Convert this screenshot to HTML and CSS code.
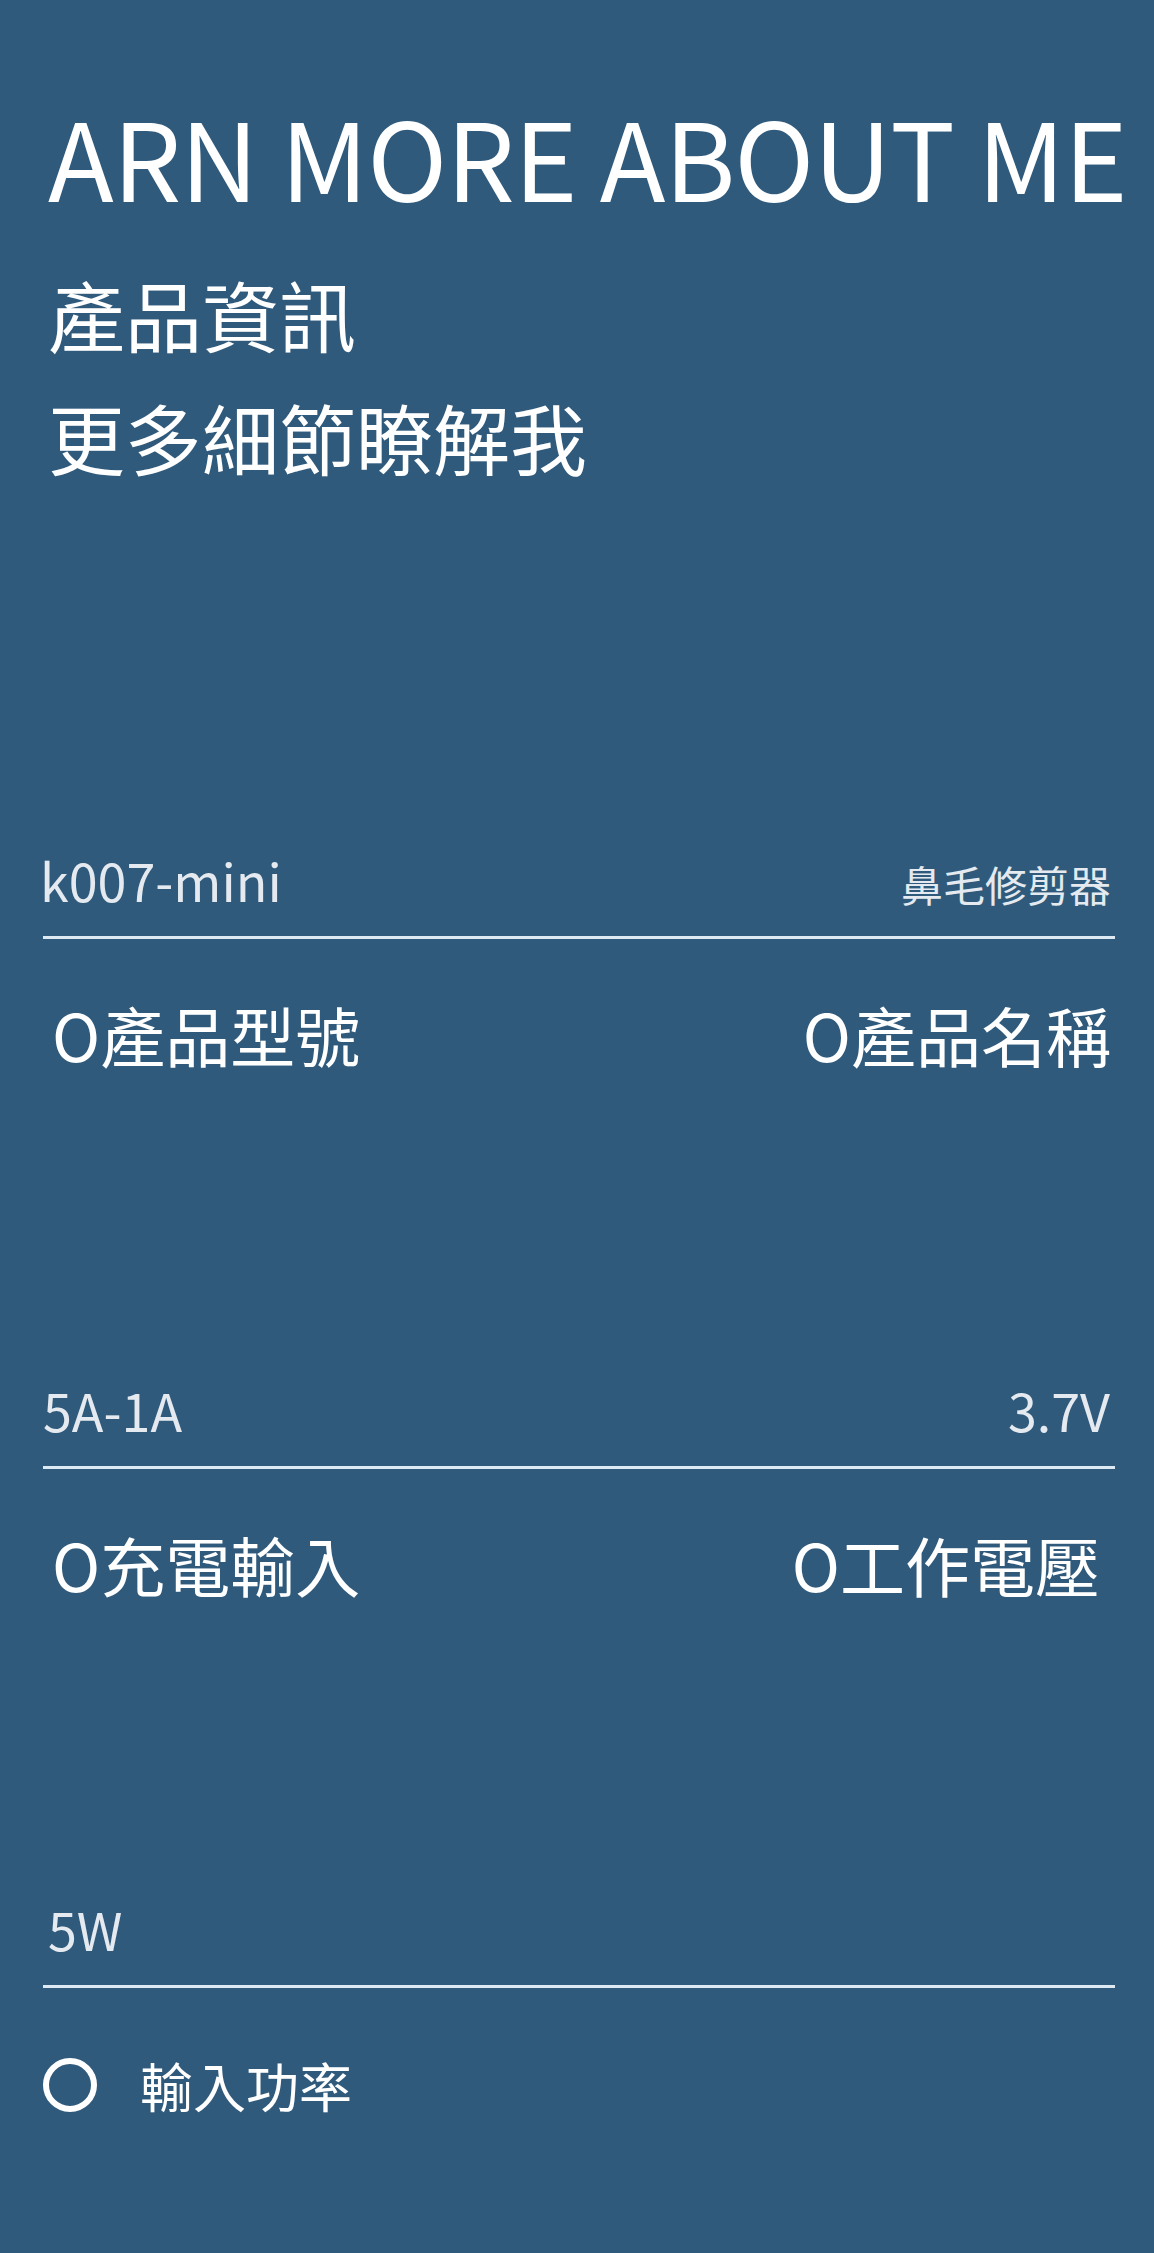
FILE: index.html
```html
<!DOCTYPE html>
<html lang="zh-Hant">
<head>
  <meta charset="UTF-8" />
  <meta name="viewport" content="width=device-width, initial-scale=1" />
  <title>產品資訊</title>
  <link rel="stylesheet" href="styles.css">
</head>
<body>
  <main class="page">
    <header class="hero">
      <h1 class="hero-title">ARN MORE ABOUT ME</h1>
      <div class="hero-sub">產品資訊</div>
      <div class="hero-sub">更多細節瞭解我</div>
    </header>

    <section class="spec spec-first">
      <div class="spec-values">
        <span class="spec-value spec-value-left">k007-mini</span>
        <span class="spec-value spec-value-small">鼻毛修剪器</span>
      </div>
      <div class="spec-line"></div>
      <div class="spec-labels">
        <span class="spec-label">O產品型號</span>
        <span class="spec-label">O產品名稱</span>
      </div>
    </section>

    <section class="spec">
      <div class="spec-values">
        <span class="spec-value">5A-1A</span>
        <span class="spec-value spec-value-right">3.7V</span>
      </div>
      <div class="spec-line"></div>
      <div class="spec-labels">
        <span class="spec-label">O充電輸入</span>
        <span class="spec-label spec-label-right">O工作電壓</span>
      </div>
    </section>

    <section class="spec spec-last">
      <div class="spec-values">
        <span class="spec-value spec-value-indent">5W</span>
      </div>
      <div class="spec-line"></div>
      <div class="spec-bullet">
        <span class="bullet-ring"></span>
        <span class="bullet-text">輸入功率</span>
      </div>
    </section>
  </main>
</body>
</html>
```

FILE: styles.css
```css
/* Page */
body {
  margin: 0;
  background-color: #2f5a7c;
  color: #ffffff;
  font-family: "Noto Sans CJK TC", "Noto Sans", sans-serif;
}
.page {
  box-sizing: border-box;
  min-height: 2253px;
  padding: 101px 39px 0 43px;
}

/* Heading block */
.hero-title {
  margin: 0 0 0 5px;
  font-size: 108px;
  line-height: 108px;
  font-weight: 400;
  letter-spacing: -1px;
  white-space: nowrap;
}
.hero-sub {
  margin: 46px 0 0 5px;
  font-size: 77px;
  line-height: 77px;
}
.hero-title + .hero-sub {
  margin-top: 66px;
}

/* Spec rows */
.spec {
  margin-top: 318px;
}
.spec-first {
  margin-top: 379px;
}
.spec-last {
  margin-top: 307px;
}
.spec-values {
  display: flex;
  justify-content: space-between;
  align-items: baseline;
  height: 52px;
}
.spec-value {
  font-size: 52px;
  line-height: 52px;
  color: #e4eaef;
}
.spec-value-left {
  margin-left: -3px;
}
.spec-value-indent {
  margin-left: 5px;
}
.spec-value-small {
  margin-right: 4px;
  font-size: 42px;
}
.spec-value-right {
  margin-right: 5px;
}
.spec-line {
  height: 3px;
  margin-top: 30px;
  background-color: #dde9f3;
}
.spec-labels {
  display: flex;
  justify-content: space-between;
  margin-top: 63px;
  padding: 0 4px 0 9px;
}
.spec-label {
  font-size: 65px;
  line-height: 64px;
}
.spec-label-right {
  margin-right: 11px;
}

/* Last row with ring bullet */
.spec-bullet {
  display: flex;
  align-items: center;
  gap: 43px;
  margin-top: 70px;
}
.bullet-ring {
  box-sizing: border-box;
  width: 54px;
  height: 54px;
  border: 6px solid #ffffff;
  border-radius: 50%;
}
.bullet-text {
  font-size: 53px;
  line-height: 54px;
}
```
